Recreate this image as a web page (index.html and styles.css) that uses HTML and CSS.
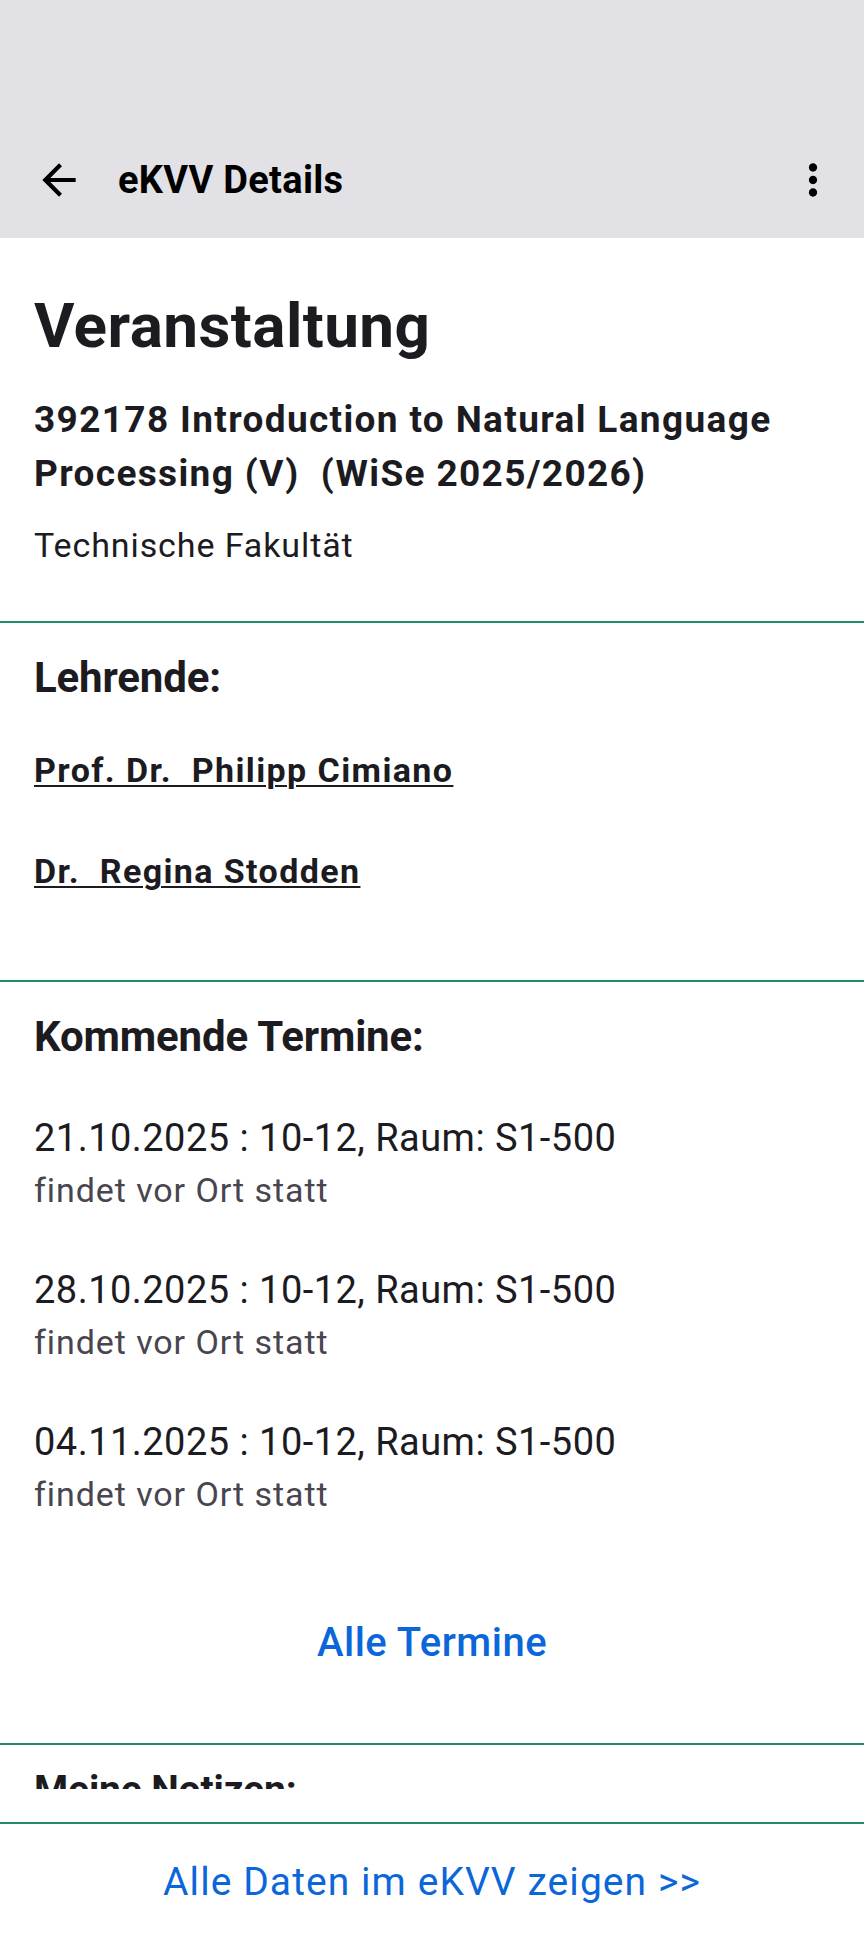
FILE: index.html
```html
<!DOCTYPE html>
<html lang="de">
<head>
<meta charset="utf-8">
<title>eKVV Details</title>
<link rel="stylesheet" href="styles.css">
</head>
<body>
<div class="screen">
  <header class="topbar">
    <div class="appbar">
      <button class="icon-btn back" aria-label="Zurück">
        <svg viewBox="0 0 24 24" width="50" height="50"><path d="M20 11H7.83l5.59-5.59L12 4l-8 8 8 8 1.41-1.41L7.830 13H20v-2z"/></svg>
      </button>
      <h1 class="appbar-title">eKVV Details</h1>
      <button class="icon-btn more" aria-label="Mehr">
        <svg viewBox="0 0 24 24" width="50" height="50"><path d="M12 8c1.1 0 2-.9 2-2s-.9-2-2-2-2 .9-2 2 .9 2 2 2zm0 2c-1.1 0-2 .9-2 2s.9 2 2 2 2-.9 2-2-.9-2-2-2zm0 6c-1.1 0-2 .9-2 2s.9 2 2 2 2-.9 2-2-.9-2-2-2z"/></svg>
      </button>
    </div>
  </header>

  <main class="scroll">
    <section class="section intro">
      <h2 class="page-title">Veranstaltung</h2>
      <p class="course-title">392178 Introduction to Natural Language Processing (V)&nbsp; (WiSe 2025/2026)</p>
      <p class="faculty">Technische Fakultät</p>
    </section>

    <section class="section teachers">
      <h3 class="section-title">Lehrende:</h3>
      <ul class="people">
        <li><a class="person" href="#">Prof. Dr.&nbsp; Philipp Cimiano</a></li>
        <li><a class="person" href="#">Dr.&nbsp; Regina Stodden</a></li>
      </ul>
    </section>

    <section class="section dates">
      <h3 class="section-title">Kommende Termine:</h3>
      <ul class="date-list">
        <li class="date-item">
          <span class="date-main">21.10.2025 : 10-12, Raum: S1-500</span>
          <span class="date-sub">findet vor Ort statt</span>
        </li>
        <li class="date-item">
          <span class="date-main">28.10.2025 : 10-12, Raum: S1-500</span>
          <span class="date-sub">findet vor Ort statt</span>
        </li>
        <li class="date-item">
          <span class="date-main">04.11.2025 : 10-12, Raum: S1-500</span>
          <span class="date-sub">findet vor Ort statt</span>
        </li>
      </ul>
      <div class="center-link-row"><a class="text-link all-dates" href="#">Alle Termine</a></div>
    </section>

    <section class="section notes">
      <h3 class="section-title notes-title">Meine Notizen:</h3>
    </section>
  </main>

  <footer class="footer">
    <a class="text-link footer-link" href="#">Alle Daten im eKVV zeigen &gt;&gt;</a>
  </footer>
</div>
</body>
</html>
```

FILE: styles.css
```css
* { box-sizing: border-box; }

html, body {
  margin: 0;
  padding: 0;
  background: #ffffff;
}

body {
  font-family: Roboto, "Noto Sans", "Liberation Sans", sans-serif;
  color: #1c1b1f;
}

.screen {
  width: 864px;
  height: 1939px;
  display: flex;
  flex-direction: column;
  overflow: hidden;
}

/* ---------- top bar ---------- */
.topbar {
  height: 238px;
  background: #e2e1e6;
  display: flex;
  flex-direction: column;
  justify-content: flex-end;
  flex: none;
}

.appbar {
  height: 116px;
  display: flex;
  align-items: center;
  padding: 0 26px 0 34px;
}

.icon-btn {
  width: 50px;
  height: 50px;
  padding: 0;
  margin: 0;
  border: 0;
  background: transparent;
  display: flex;
  align-items: center;
  justify-content: center;
  flex: none;
}

.icon-btn svg { fill: #000000; display: block; }

.appbar-title {
  margin: 0 0 0 34px;
  flex: 1;
  font-size: 38px;
  line-height: 46px;
  font-weight: 700;
  letter-spacing: 0.3px;
  color: #000000;
}

/* ---------- scroll area ---------- */
.scroll {
  height: 1551px;
  overflow: hidden;
  flex: none;
}

.section {
  padding: 0 34px;
  border-top: 2px solid #218b6e;
}

.section:first-child { border-top: 0; }

.intro {
  padding-top: 52px;
  padding-bottom: 54px;
}

.page-title {
  margin: 0;
  font-size: 62px;
  line-height: 72px;
  font-weight: 700;
  letter-spacing: 0.45px;
}

.course-title {
  margin: 31px 0 0;
  font-size: 37px;
  line-height: 54px;
  font-weight: 700;
  letter-spacing: 1.35px;
}

.faculty {
  margin: 22px 0 0;
  font-size: 34px;
  line-height: 44px;
  font-weight: 400;
  letter-spacing: 0.9px;
}

.section-title {
  margin: 0;
  font-size: 42px;
  line-height: 50px;
  font-weight: 700;
  letter-spacing: -0.15px;
}

.teachers {
  padding-top: 30px;
  padding-bottom: 87px;
}

.people {
  list-style: none;
  margin: 45px 0 0;
  padding: 0;
  display: flex;
  flex-direction: column;
  gap: 57px;
}

.person {
  display: inline-block;
  font-size: 34px;
  line-height: 44px;
  font-weight: 700;
  letter-spacing: 1.4px;
  color: #1c1b1f;
  text-decoration: underline;
  text-decoration-thickness: 2px;
  text-underline-offset: 3px;
}

.dates {
  padding-top: 30px;
  padding-bottom: 76px;
}

.date-list {
  list-style: none;
  margin: 51px 0 0;
  padding: 0;
  display: flex;
  flex-direction: column;
  gap: 50px;
}

.date-item {
  display: flex;
  flex-direction: column;
  gap: 2px;
}

.date-main {
  font-size: 38px;
  line-height: 50px;
  font-weight: 400;
  letter-spacing: 0.47px;
  color: #1c1b1f;
}

.date-sub {
  font-size: 34px;
  line-height: 50px;
  font-weight: 400;
  letter-spacing: 0.93px;
  color: #49454f;
}

.center-link-row {
  margin-top: 100px;
  display: flex;
  justify-content: center;
}

.text-link {
  color: #0b67d9;
  text-decoration: none;
}

.all-dates {
  font-size: 40px;
  line-height: 48px;
  font-weight: 500;
  letter-spacing: 0.5px;
}

.notes {
  padding-top: 20px;
}

.notes-title {
  font-size: 39px;
}

/* ---------- footer ---------- */
.footer {
  flex: none;
  margin-top: 33px;
  border-top: 2px solid #218b6e;
  padding-top: 33px;
  display: flex;
  justify-content: center;
}

.footer-link {
  font-size: 39px;
  line-height: 50px;
  font-weight: 400;
  letter-spacing: 1.07px;
}
```
